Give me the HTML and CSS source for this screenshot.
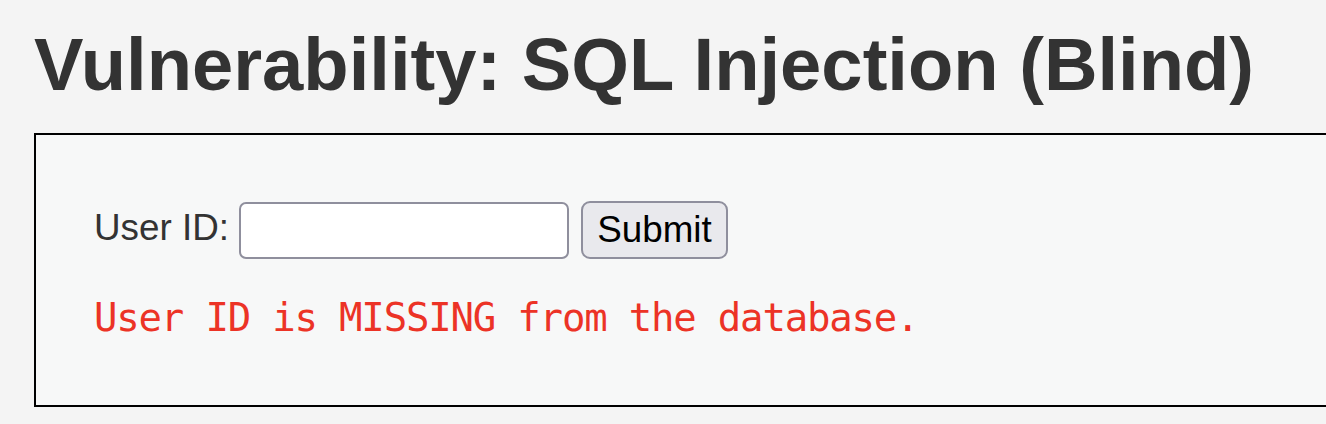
FILE: index.html
```html
<!DOCTYPE html>
<html lang="en">
<head>
<meta charset="utf-8">
<title>Vulnerability: SQL Injection (Blind)</title>
<link rel="stylesheet" href="styles.css">
</head>
<body>
<div class="page">
  <h1 class="title">Vulnerability: SQL Injection (Blind)</h1>
  <div class="code-area">
    <form class="id-form" action="#" method="get">
      <label class="id-label" for="uid">User ID:</label>
      <input class="id-input" id="uid" type="text" name="id">
      <button class="id-submit" type="button">Submit</button>
    </form>
    <pre class="result">User ID is MISSING from the database.</pre>
  </div>
</div>
</body>
</html>
```
FILE: styles.css
```css
html, body {
  margin: 0;
  padding: 0;
  background: #f4f4f4;
  overflow: hidden;
}

.page {
  padding-left: 34px;
  font-family: "Liberation Sans", Arial, sans-serif;
  font-size: 36.8px;
  color: #333;
}

.title {
  margin: 22px 0 26px 0;
  font-size: 74.2px;
  font-weight: bold;
  line-height: normal;
  color: #333;
}

.code-area {
  border: 2px solid #000;
  border-right: none;
  background: #f7f8f8;
  padding: 66px 0 0 58px;
  box-sizing: border-box;
  height: 274px;
}

.id-form {
  display: flex;
  align-items: center;
  margin: 0;
}

.id-label {
  margin-right: 10px;
  margin-bottom: 4px;
  color: #333;
}

.id-input {
  width: 330px;
  height: 57px;
  box-sizing: border-box;
  border: 2px solid #8f8f9d;
  border-radius: 7px;
  background: #fff;
  margin: 0 12px 0 0;
  padding: 0 6px;
  font: inherit;
}

.id-submit {
  width: 147px;
  height: 58px;
  box-sizing: border-box;
  border: 2px solid #8f8f9d;
  border-radius: 9px;
  background: #e9e9ed;
  color: #000;
  font-family: "Liberation Sans", Arial, sans-serif;
  font-size: 36.8px;
  padding: 0;
  margin: 0;
}

.result {
  margin: 36px 0 0 0;
  font-family: "DejaVu Sans Mono", Menlo, monospace;
  font-size: 39px;
  letter-spacing: -1.2px;
  line-height: normal;
  color: #ec3326;
}
```
